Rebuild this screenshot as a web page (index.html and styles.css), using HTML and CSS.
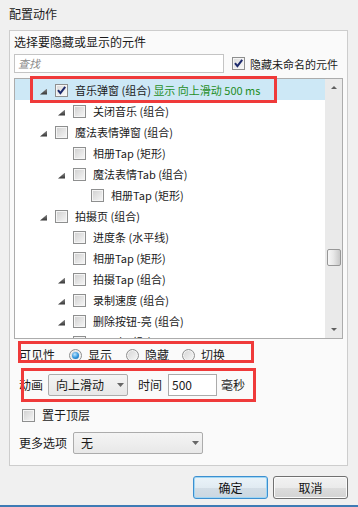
FILE: index.html
```html
<!DOCTYPE html>
<html>
<head>
<meta charset="utf-8">
<link rel="stylesheet" href="styles.css">
</head>
<body>
<div class="title">配置动作</div>
<div class="group">
  <div class="lbl">选择要隐藏或显示的元件</div>
  <div class="search-row">
    <div class="search">查找</div>
    <div class="chk-label"><span class="cb checked"><svg width="11" height="11" viewBox="0 0 11 11"><path d="M2 5.2 L4.4 8.2 L9.2 1.8" fill="none" stroke="#1d2a6c" stroke-width="2"/></svg></span>隐藏未命名的元件</div>
  </div>
  <div class="tree">
    <div class="rows">
      <div class="row sel l0"><span class="tog on"></span><span class="cb checked"><svg width="11" height="11" viewBox="0 0 11 11"><path d="M2 5.2 L4.4 8.2 L9.2 1.8" fill="none" stroke="#1d2a6c" stroke-width="2"/></svg></span><span class="txt">音乐弹窗 (组合) <span class="green">显示 向上滑动 500 ms</span></span></div>
      <div class="row l1"><span class="tog on"></span><span class="cb"></span><span class="txt">关闭音乐 (组合)</span></div>
      <div class="row l0"><span class="tog on"></span><span class="cb"></span><span class="txt">魔法表情弹窗 (组合)</span></div>
      <div class="row l1"><span class="tog"></span><span class="cb"></span><span class="txt">相册Tap (矩形)</span></div>
      <div class="row l1"><span class="tog on"></span><span class="cb"></span><span class="txt">魔法表情Tab (组合)</span></div>
      <div class="row l2"><span class="tog"></span><span class="cb"></span><span class="txt">相册Tap (矩形)</span></div>
      <div class="row l0"><span class="tog on"></span><span class="cb"></span><span class="txt">拍摄页 (组合)</span></div>
      <div class="row l1"><span class="tog"></span><span class="cb"></span><span class="txt">进度条 (水平线)</span></div>
      <div class="row l1"><span class="tog"></span><span class="cb"></span><span class="txt">相册Tap (矩形)</span></div>
      <div class="row l1"><span class="tog on"></span><span class="cb"></span><span class="txt">拍摄Tap (组合)</span></div>
      <div class="row l1"><span class="tog on"></span><span class="cb"></span><span class="txt">录制速度 (组合)</span></div>
      <div class="row l1"><span class="tog on"></span><span class="cb"></span><span class="txt">删除按钮-亮 (组合)</span></div>
      <div class="row l1"><span class="tog on"></span><span class="cb"></span><span class="txt">下一步 (组合)</span></div>
    </div>
    <div class="scroll">
      <div class="sb-btn"><svg width="6" height="3" viewBox="0 0 6 3"><path d="M3 0 L6 3 H0 Z" fill="#5f5f5f"/></svg></div>
      <div class="sb-track"><div class="thumb"></div></div>
      <div class="sb-btn"><svg width="6" height="3" viewBox="0 0 6 3"><path d="M0 0 H6 L3 3 Z" fill="#5f5f5f"/></svg></div>
    </div>
  </div>
  <div class="lower">
    <div class="vis">
      <span>可见性</span>
      <span class="radio-opt"><span class="radio on"></span>显示</span>
      <span class="radio-opt"><span class="radio"></span>隐藏</span>
      <span class="radio-opt last"><span class="radio"></span>切换</span>
    </div>
    <div class="anim">
      <span>动画</span>
      <div class="combo anim-combo"><span>向上滑动</span><svg width="7" height="4" viewBox="0 0 7 4"><path d="M0 0 H7 L3.5 4 Z" fill="#676767"/></svg></div>
      <span class="time-lbl">时间</span>
      <div class="num">500</div>
      <span class="ms">毫秒</span>
    </div>
    <div class="topl"><span class="cb"></span>置于顶层</div>
    <div class="more">
      <span>更多选项</span>
      <div class="combo more-combo"><span>无</span><svg width="7" height="4" viewBox="0 0 7 4"><path d="M0 0 H7 L3.5 4 Z" fill="#676767"/></svg></div>
    </div>
  </div>
</div>
<div class="btns">
  <div class="btn ok">确定</div>
  <div class="btn">取消</div>
</div>
<div class="bottom-line"></div>

<div class="mark m1"></div>
<div class="mark m2"></div>
<div class="mark m3"></div>
</body>
</html>
```
FILE: styles.css
```css
* { box-sizing: border-box; }
body {
  margin: 0;
  width: 358px;
  height: 507px;
  overflow: hidden;
  position: relative;
  background: #f0f0f0;
  font: 12px/16px "Noto Sans CJK SC", "Microsoft YaHei", sans-serif;
  color: #1a1a1a;
}
.title { padding: 6px 0 8px 9px; height: 30px; line-height: 16px; color: #222; }
.group {
  margin: 0 10px 0 9px;
  border: 1px solid #cdcdcd;
  background: #fafafa;
  padding: 0 4px 11px;
}
.lbl { height: 23px; padding-top: 2px; line-height: 18px; }
.search-row { display: flex; align-items: center; height: 19px; margin-bottom: 5px; }
.search {
  width: 210px; height: 19px;
  border: 1px solid #c4c4c4;
  background: #fff;
  color: #8a8a8a;
  font-style: italic;
  font-size: 11px;
  padding-left: 3px;
  line-height: 17px;
}
.chk-label { display: flex; align-items: center; margin-left: 8px; gap: 5px; white-space: nowrap; font-size: 11px; }

.cb {
  width: 13px; height: 13px; flex: none;
  border: 1px solid #8e8f8f;
  background: linear-gradient(135deg, #cfcfcf, #f7f7f7);
  box-shadow: inset 0 0 0 1px #f5f5f5;
  display: flex; align-items: center; justify-content: center;
}
.cb.checked { background: linear-gradient(135deg, #d9d9d9, #fbfbfb); }

.tree { display: flex; height: 261px; border: 1px solid #acacac; background: #fff; }
.rows { flex: 1; overflow: hidden; font-size: 11px; }
.row { display: flex; align-items: center; height: 21px; white-space: nowrap; padding-top: 1px; }
.row.sel { background: #cde8f6; }
.l0 { padding-left: 25px; }
.l1 { padding-left: 43px; }
.l2 { padding-left: 61px; }
.tog { width: 7px; height: 6px; flex: none; margin-right: 8px; margin-top: 3px; }
.tog.on {
  background: linear-gradient(#858585, #2f2f2f);
  clip-path: polygon(100% 0, 100% 100%, 0 100%);
}
.row .cb { margin-right: 7px; }
.green { color: #1f8e1f; }

.scroll { width: 17px; flex: none; background: #eaeaea; display: flex; flex-direction: column; }
.sb-btn { height: 17px; flex: none; display: flex; align-items: center; justify-content: center; }
.sb-track { flex: 1; }
.thumb {
  margin: 153px 1px 0 2px;
  height: 17px;
  border: 1px solid #979797;
  border-radius: 2px;
  background: linear-gradient(90deg, #f7f7f7, #e8e8e8 45%, #c8c8c8);
}

.lower { padding-left: 5px; }
.vis { display: flex; align-items: center; height: 20px; margin-top: 6px; }
.radio-opt { display: flex; align-items: center; gap: 6px; margin-left: 14px; }
.radio-opt.last { margin-left: 13px; }
.radio {
  width: 13px; height: 13px; flex: none;
  border-radius: 50%;
  border: 1px solid #8e8f8f;
  background: linear-gradient(135deg, #d4d4d4, #f8f8f8);
  box-shadow: inset 0 0 0 1px #f4f4f4;
  display: flex; align-items: center; justify-content: center;
}
.radio.on::after {
  content: "";
  width: 7px; height: 7px;
  border-radius: 50%;
  background: radial-gradient(circle at 40% 35%, #bfe6ff, #2e94dc 55%, #145c9e);
}
.anim { display: flex; align-items: center; height: 22px; margin-top: 9px; white-space: nowrap; }
.combo {
  height: 22px;
  border: 1px solid #acacac;
  border-radius: 2px;
  background: linear-gradient(#f4f4f4, #e8e8e8);
  display: flex; align-items: center; justify-content: space-between;
  padding: 0 3px 0 7px;
}
.anim-combo { width: 80px; margin-left: 5px; }
.time-lbl { margin-left: 10px; }
.num {
  width: 49px; height: 22px; margin-left: 6px;
  border: 1px solid #ababab; background: #fff;
  padding-left: 3px; line-height: 20px;
}
.ms { margin-left: 4px; }
.topl { display: flex; align-items: center; height: 16px; margin-top: 11px; }
.topl .cb { margin-left: 3px; margin-right: 7px; }
.more { display: flex; align-items: center; height: 22px; margin-top: 9px; }
.more-combo { width: 130px; margin-left: 6px; }

.btns { display: flex; justify-content: flex-end; gap: 5px; margin: 10px 10px 0 0; }
.btn {
  width: 75px; height: 23px;
  border: 1px solid #707070;
  border-radius: 3px;
  display: flex; align-items: center; justify-content: center;
  background: linear-gradient(#f2f2f2 0%, #ebebeb 50%, #dddddd 51%, #d3d3d3 100%);
  box-shadow: inset 0 0 0 1px #fbfbfb;
  color: #111;
}
.btn.ok {
  border-color: #3c8fd0;
  background: linear-gradient(#eaf3f9 0%, #e1ebf2 50%, #d2dde6 51%, #cbd7e1 100%);
  box-shadow: inset 0 0 0 1px #9fd6f4;
}
.bottom-line { margin-top: 6px; height: 2px; background: #3e7bb5; }

.mark { position: absolute; border: 3px solid #ef3a3a; }
.m1 { left: 30px; top: 76px; width: 247px; height: 27px; }
.m2 { left: 18px; top: 341px; width: 236px; height: 22px; }
.m3 { left: 21px; top: 368px; width: 235px; height: 34px; }
```
